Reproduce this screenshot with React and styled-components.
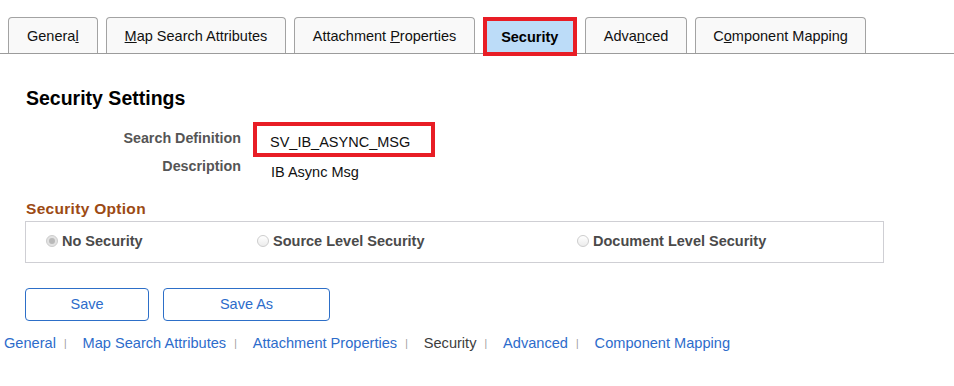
import React from 'react'
import styled, { createGlobalStyle } from 'styled-components'

const GlobalStyle = createGlobalStyle`
    body {
        margin: 0;
        background: #ffffff;
        font-family: 'Liberation Sans', Arial, sans-serif;
    }
`

const Page = styled.div`
    width: 954px;
    height: 386px;
    background: #ffffff;
    overflow: hidden;
`

const TabBar = styled.div`
    display: flex;
    align-items: flex-end;
    gap: 8px;
    height: 54px;
    padding-left: 8px;
    border-bottom: 1px solid #9b9b9b;
    box-sizing: border-box;
`

const Tab = styled.div`
    height: 36px;
    box-sizing: border-box;
    padding: 0 ${props => props.$pad || 18}px;
    display: flex;
    align-items: center;
    border: 1px solid #a3a3a3;
    border-bottom: none;
    border-radius: 4px 4px 0 0;
    background: #f9f9f9;
    color: #111;
    font-size: 14.5px;
    white-space: nowrap;
`

const ActiveTab = styled.div`
    width: 94px;
    height: 39px;
    margin-bottom: -3px;
    box-sizing: border-box;
    display: flex;
    align-items: center;
    justify-content: center;
    border: 4px solid #e81d25;
    background: #bcdcf8;
    color: #000;
    font-size: 14.5px;
    font-weight: bold;
    position: relative;
`

const Content = styled.div`
    padding: 0 0 0 25px;
`

const Heading = styled.h1`
    margin: 33px 0 0 1px;
    font-size: 19.5px;
    line-height: 22px;
    font-weight: bold;
    color: #000;
`

const Fields = styled.div`
    display: grid;
    grid-template-columns: 216px auto;
    column-gap: 12px;
    margin-top: 13px;
    align-items: start;
`

const Label = styled.div`
    text-align: right;
    font-size: 14.3px;
    font-weight: bold;
    color: #555;
    line-height: 18px;
    padding-top: ${props => props.$top || 0}px;
`

const Highlight = styled.div`
    width: 182px;
    height: 35px;
    box-sizing: border-box;
    border: 4px solid #e81d25;
    padding: 7px 0 0 13px;
    font-size: 14.5px;
    line-height: 18px;
    color: #111;
`

const Value = styled.div`
    font-size: 14.5px;
    line-height: 18px;
    color: #111;
    padding: 6px 0 0 18px;
`

const SectionTitle = styled.div`
    margin-top: 19px;
    margin-left: 1px;
    font-size: 15.5px;
    font-weight: bold;
    line-height: 18px;
    letter-spacing: 0.3px;
    color: #9c4a14;
`

const OptionBox = styled.div`
    width: 859px;
    height: 42px;
    box-sizing: border-box;
    margin-top: 3px;
    border: 1px solid #cfcfd4;
    display: grid;
    grid-template-columns: 211px 320px auto;
    align-items: center;
    padding: 0 0 2px 20px;
`

const Option = styled.label`
    display: flex;
    align-items: center;
    gap: 4px;
    font-size: 14.5px;
    font-weight: bold;
    color: #4a4a4a;
    white-space: nowrap;
`

const Radio = styled.span`
    width: 12px;
    height: 12px;
    box-sizing: border-box;
    border-radius: 50%;
    border: 1px solid #cdcdcd;
    background: ${props => props.$checked ? '#e2e2e2' : 'linear-gradient(#ffffff, #ececec)'};
    display: flex;
    align-items: center;
    justify-content: center;

    &::after {
        content: '';
        width: 6px;
        height: 6px;
        border-radius: 50%;
        background: ${props => props.$checked ? '#b9b9b9' : 'transparent'};
    }
`

const Buttons = styled.div`
    display: flex;
    gap: 14px;
    margin-top: 25px;
`

const Button = styled.button`
    width: ${props => props.$width}px;
    height: 33px;
    box-sizing: border-box;
    border: 1px solid #2d6fc8;
    border-radius: 4px;
    background: #ffffff;
    color: #2d6ccb;
    font-family: 'Liberation Sans', Arial, sans-serif;
    font-size: 14.5px;
    padding: 0 0 2px;
`

const LinkBar = styled.div`
    display: flex;
    align-items: center;
    margin-top: 11px;
    padding-left: 4px;
    font-size: 14.6px;
    line-height: 18px;
`

const NavLink = styled.a`
    color: ${props => props.$current ? '#3d3d3d' : '#2d6ccb'};
    text-decoration: none;
`

const Sep = styled.span`
    font-size: 10px;
    color: #9a9a9a;
    margin: 3px 16px 0 8px;
`

const tabs = [
    { key: 'general', label: <>Genera<u>l</u></>, pad: 18 },
    { key: 'map', label: <><u>M</u>ap Search Attributes</>, pad: 18 },
    { key: 'attach', label: <>Attachment <u>P</u>roperties</>, pad: 17.5 },
    { key: 'security', label: 'Security', active: true },
    { key: 'advanced', label: <>Adva<u>n</u>ced</>, pad: 18 },
    { key: 'mapping', label: <>C<u>o</u>mponent Mapping</>, pad: 17 },
]

const links = ['General', 'Map Search Attributes', 'Attachment Properties', 'Security', 'Advanced', 'Component Mapping']

const App = () => {
    return (
        <Page>
            <GlobalStyle />
            <TabBar>
                {tabs.map(t => t.active
                    ? <ActiveTab key={t.key}><span>{t.label}</span></ActiveTab>
                    : <Tab key={t.key} $pad={t.pad}><span>{t.label}</span></Tab>
                )}
            </TabBar>
            <Content>
                <Heading>Security Settings</Heading>
                <Fields>
                    <Label $top={7}>Search Definition</Label>
                    <Highlight>SV_IB_ASYNC_MSG</Highlight>
                    <Label>Description</Label>
                    <Value>IB Async Msg</Value>
                </Fields>
                <SectionTitle>Security Option</SectionTitle>
                <OptionBox>
                    <Option><Radio $checked />No Security</Option>
                    <Option><Radio />Source Level Security</Option>
                    <Option><Radio />Document Level Security</Option>
                </OptionBox>
                <Buttons>
                    <Button $width={124}>Save</Button>
                    <Button $width={167}>Save As</Button>
                </Buttons>
            </Content>
            <LinkBar>
                {links.map((l, i) => (
                    <React.Fragment key={l}>
                        <NavLink href="#" $current={l === 'Security'}>{l}</NavLink>
                        {i < links.length - 1 && <Sep>|</Sep>}
                    </React.Fragment>
                ))}
            </LinkBar>
        </Page>
    )
}

export default App
